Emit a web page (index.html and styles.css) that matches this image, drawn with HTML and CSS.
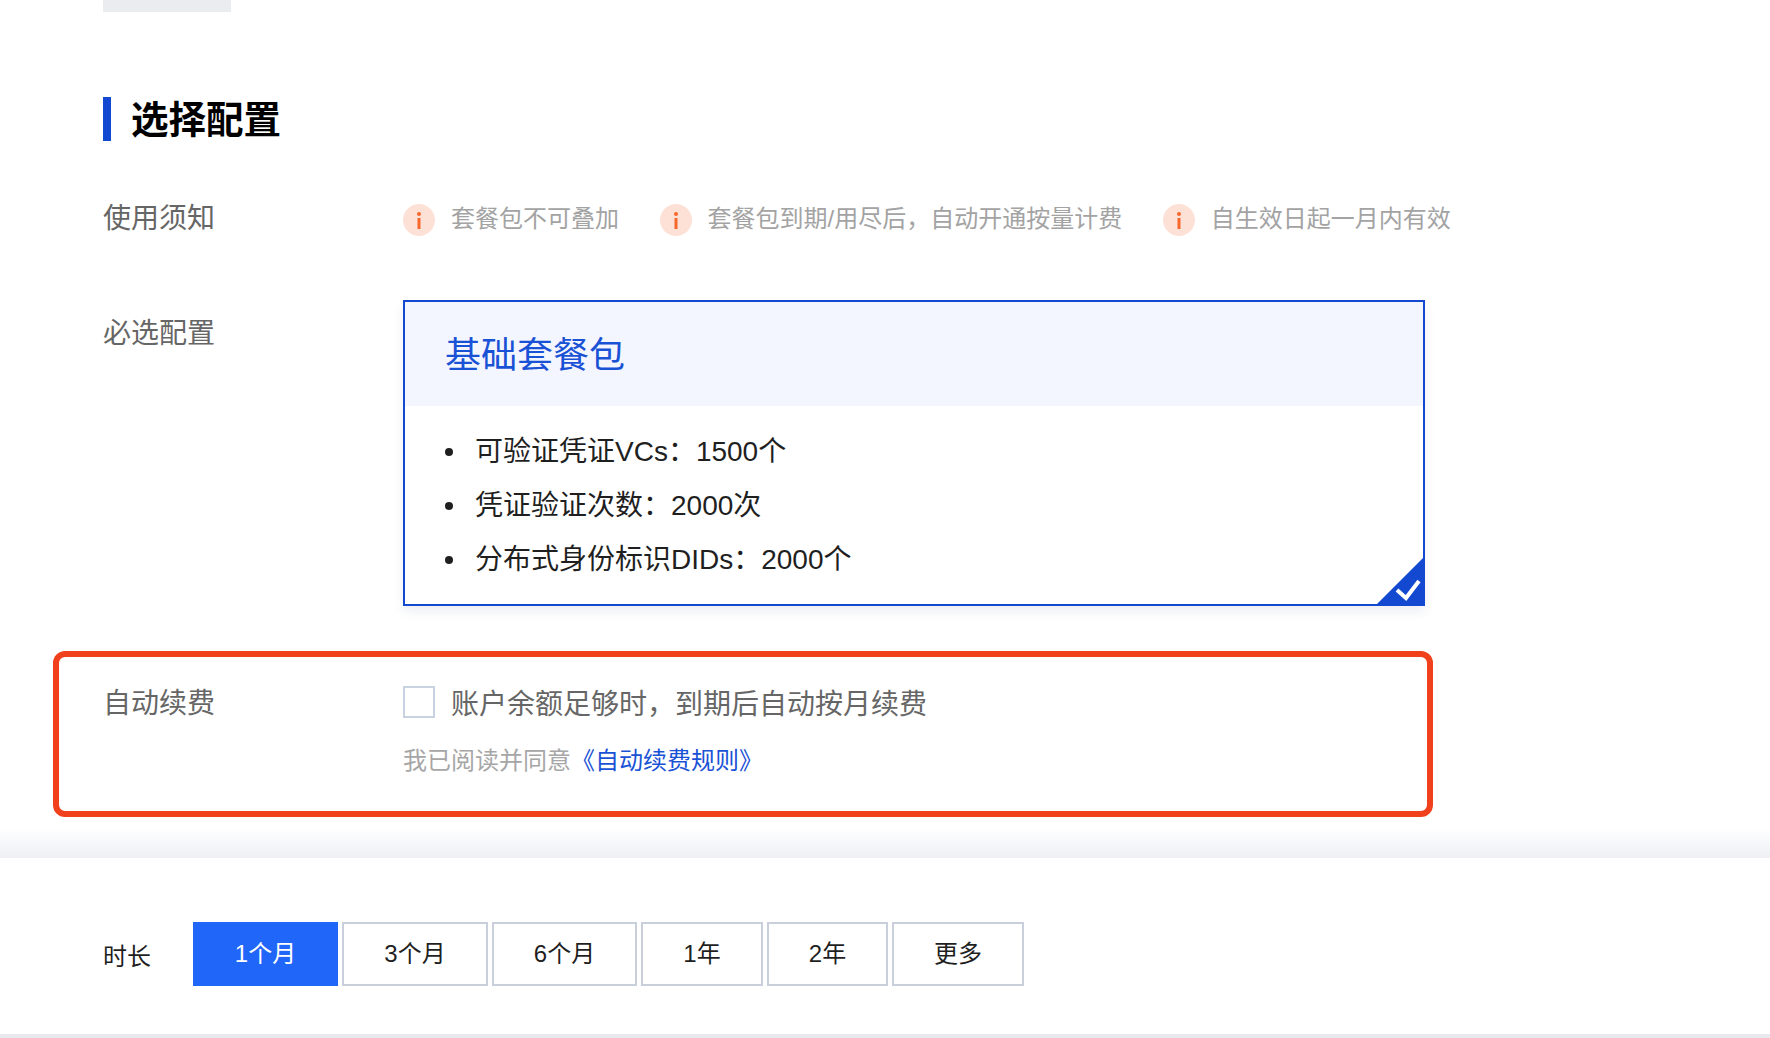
FILE: index.html
```html
<!DOCTYPE html>
<html lang="zh-CN">
<head>
<meta charset="utf-8">
<title>选择配置</title>
<link rel="stylesheet" href="styles.css">
</head>
<body>
<main class="page">
  <div class="top-strip">
    <div class="top-thumb"></div>
  </div>

  <section class="config">
    <h2 class="section-title">选择配置</h2>

    <div class="row row-notice">
      <div class="row-label">使用须知</div>
      <ul class="notices">
        <li class="notice"><span class="notice-icon"><svg viewBox="0 0 32 32" width="32" height="32"><circle cx="16" cy="16" r="16" fill="#fde1d7"/><circle cx="16" cy="10" r="2" fill="#f8672a"/><rect x="14.500" y="14" width="3" height="11" fill="#f8672a"/></svg></span>套餐包不可叠加</li>
        <li class="notice"><span class="notice-icon"><svg viewBox="0 0 32 32" width="32" height="32"><circle cx="16" cy="16" r="16" fill="#fde1d7"/><circle cx="16" cy="10" r="2" fill="#f8672a"/><rect x="14.500" y="14" width="3" height="11" fill="#f8672a"/></svg></span>套餐包到期/用尽后&#xFF0C;自动开通按量计费</li>
        <li class="notice"><span class="notice-icon"><svg viewBox="0 0 32 32" width="32" height="32"><circle cx="16" cy="16" r="16" fill="#fde1d7"/><circle cx="16" cy="10" r="2" fill="#f8672a"/><rect x="14.500" y="14" width="3" height="11" fill="#f8672a"/></svg></span>自生效日起一月内有效</li>
      </ul>
    </div>

    <div class="row row-plan">
      <div class="row-label">必选配置</div>
      <div class="plan-card">
        <div class="plan-head">基础套餐包</div>
        <ul class="plan-list">
          <li>可验证凭证VCs&#xFF1A;1500个</li>
          <li>凭证验证次数&#xFF1A;2000次</li>
          <li>分布式身份标识DIDs&#xFF1A;2000个</li>
        </ul>
        <svg class="plan-corner" viewBox="0 0 50 50" width="50" height="50"><path d="M50 0V50H0Z" fill="#1249d0"/><path d="M22 34L31 42L44 25" fill="none" stroke="#fff" stroke-width="4"/></svg>
      </div>
    </div>

    <div class="renew-box">
      <div class="renew-line">
        <div class="row-label">自动续费</div>
        <label class="renew-check"><span class="checkbox"></span>账户余额足够时&#xFF0C;到期后自动按月续费</label>
      </div>
      <p class="renew-agree">我已阅读并同意<a class="renew-link">《自动续费规则》</a></p>
    </div>
  </section>

  <div class="fade-band"></div>

  <section class="duration">
    <span class="duration-label">时长</span>
    <div class="duration-options">
      <button class="opt opt-active w-145">1个月</button>
      <button class="opt w-146">3个月</button>
      <button class="opt w-145">6个月</button>
      <button class="opt w-122">1年</button>
      <button class="opt w-121">2年</button>
      <button class="opt w-132">更多</button>
    </div>
  </section>
  <div class="bottom-bar"></div>
</main>
</body>
</html>
```

FILE: styles.css
```css
* { box-sizing: border-box; }
html, body { margin: 0; padding: 0; background: #fff; }
body { font-family: "Liberation Sans", "Noto Sans CJK SC", sans-serif; width: 1770px; height: 1038px; overflow: hidden; }
.page { display: flex; flex-direction: column; height: 1038px; }

.top-strip { height: 12px; padding-left: 103px; flex: none; }
.top-thumb { width: 128px; height: 12px; background: #ebecef; }

.config { flex: none; height: 815px; padding: 85px 0 0 103px; }
.section-title { margin: 0; height: 44px; line-height: 47px; border-left: 8px solid #1249d0; padding-left: 20px; font-size: 37.500px; font-weight: 700; color: #000; }

.row { display: flex; }
.row-label { width: 300px; flex: none; font-size: 28px; color: #666; line-height: 40px; }
.row-notice { margin-top: 54px; height: 40px; align-items: flex-start; }
.row-notice .row-label { padding-top: 4px; }
.notices { display: flex; margin: 0; padding: 1px 0 0; list-style: none; gap: 40.500px; }
.notice { display: flex; align-items: center; height: 40px; font-size: 24px; color: #a3a3a3; white-space: nowrap; }
.notice-icon { display: flex; width: 32px; height: 32px; margin-right: 16px; margin-top: 8px; }

.row-plan { margin-top: 65px; }
.row-plan .row-label { padding-top: 14px; }
.plan-card { position: relative; width: 1022px; height: 306px; border: 2px solid #1249d0; box-shadow: 0 6px 10px rgba(40, 60, 130, .08); background: #fff; }
.plan-head { height: 104px; background: #f3f6fe; padding-left: 40px; font-size: 36px; line-height: 108px; color: #1a52d6; }
.plan-list { margin: 0; padding: 19px 0 0 40px; font-size: 28px; line-height: 54px; color: #1f1f1f; list-style: none; }
.plan-list li { display: flex; align-items: center; }
.plan-list li::before { content: ""; width: 8px; height: 8px; border-radius: 50%; background: #1f1f1f; margin-right: 22px; flex: none; }
.plan-corner { position: absolute; right: -2px; bottom: -2px; display: block; }

.renew-box { margin: 45px 0 0 -50px; width: 1380px; height: 166px; border: 6px solid #f0401c; border-radius: 12px; padding: 29px 0 0 44px; }
.renew-line { display: flex; height: 32px; align-items: center; }
.renew-line .row-label { padding-top: 4px; }
.renew-check { display: flex; align-items: center; font-size: 28px; color: #666; white-space: nowrap; }
.checkbox { width: 32px; height: 32px; border: 2px solid #c9d2e0; background: #fff; margin-right: 16px; flex: none; }
.renew-agree { margin: 27px 0 0 300px; font-size: 24px; line-height: 32px; color: #a6a6a6; }
.renew-link { color: #1a52d6; }

.fade-band { flex: none; height: 31px; background: linear-gradient(#fff, #eef0f4); }

.duration { flex: 1; display: flex; align-items: flex-start; padding: 64px 0 0 103px; }
.duration-label { width: 90px; height: 64px; line-height: 70px; font-size: 24px; color: #1f1f1f; flex: none; }
.duration-options { display: flex; gap: 4px; }
.opt { height: 64px; border: 2px solid #c9d0dc; background: #fff; font: inherit; font-size: 24px; line-height: 1; color: #1f1f1f; padding: 0; }
.opt-active { background: #1f66f9; border-color: #1f66f9; color: #fff; }
.w-145 { width: 145px; }
.w-146 { width: 146px; }
.w-122 { width: 122px; }
.w-121 { width: 121px; }
.w-132 { width: 132px; }
.bottom-bar { flex: none; height: 4px; background: #e8eaf0; }
```
